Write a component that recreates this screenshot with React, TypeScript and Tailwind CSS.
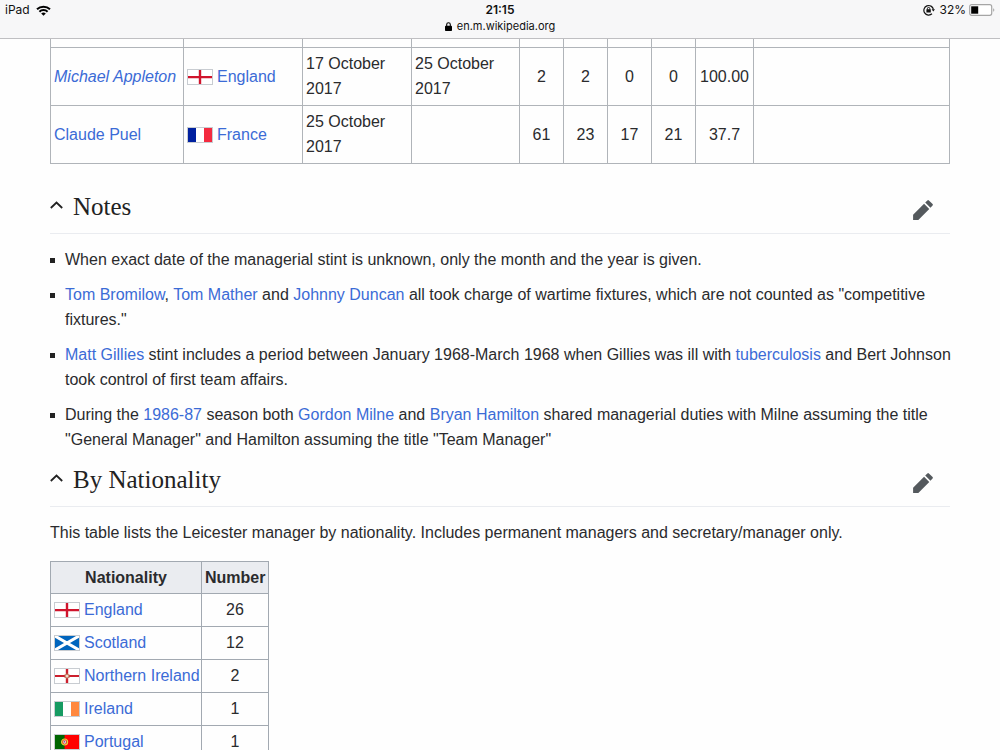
import type { ReactNode } from "react";

type Country =
    | "England"
    | "France"
    | "Scotland"
    | "Northern Ireland"
    | "Ireland"
    | "Portugal";

const managers: {
    name: string;
    caretaker: boolean;
    country: Country;
    from: string;
    to: string;
    stats: string[];
}[] = [
    {
        name: "Michael Appleton",
        caretaker: true,
        country: "England",
        from: "17 October 2017",
        to: "25 October 2017",
        stats: ["2", "2", "0", "0", "100.00"],
    },
    {
        name: "Claude Puel",
        caretaker: false,
        country: "France",
        from: "25 October 2017",
        to: "",
        stats: ["61", "23", "17", "21", "37.7"],
    },
];

const nationalities: { country: Country; count: number }[] = [
    { country: "England", count: 26 },
    { country: "Scotland", count: 12 },
    { country: "Northern Ireland", count: 2 },
    { country: "Ireland", count: 1 },
    { country: "Portugal", count: 1 },
];

const flags: Record<Country, ReactNode> = {
    England: (
        <>
            <path fill="#fff" d="M0 0h24v14H0z" />
            <path fill="#d0142c" d="M10.8 0h2.4v14h-2.4zM0 6h24v2.2H0z" />
        </>
    ),
    France: (
        <>
            <path fill="#fff" d="M0 0h24v14H0z" />
            <path fill="#00209f" d="M0 0h8v14H0z" />
            <path fill="#f42a3f" d="M16 0h8v14h-8z" />
        </>
    ),
    Scotland: (
        <>
            <path fill="#0065bd" d="M0 0h24v14H0z" />
            <path stroke="#fff" strokeWidth="3" d="M0 0l24 14M24 0L0 14" />
        </>
    ),
    "Northern Ireland": (
        <>
            <path fill="#fff" d="M0 0h24v14H0z" />
            <path fill="#cc1f2d" d="M10.8 0h2.4v14h-2.4zM0 6h24v2H0z" />
            <path
                fill="#f4dfd3"
                stroke="#b05a3c"
                strokeWidth=".8"
                d="M12 4.4l.8 1.4 1.6.1-.8 1.2.8 1.2-1.6.1-.8 1.4-.8-1.4-1.6-.1.8-1.2-.8-1.2 1.6-.1z"
            />
        </>
    ),
    Ireland: (
        <>
            <path fill="#fff" d="M0 0h24v14H0z" />
            <path fill="#169b62" d="M0 0h8v14H0z" />
            <path fill="#ff883e" d="M16 0h8v14h-8z" />
        </>
    ),
    Portugal: (
        <>
            <path fill="#f00" d="M0 0h24v14H0z" />
            <path fill="#060" d="M0 0h9.6v14H0z" />
            <circle
                cx="9.6"
                cy="7"
                r="3"
                fill="#d33"
                stroke="#e8d23a"
                strokeWidth="1.2"
            />
            <path fill="#fbe6e0" d="M8.4 5.4h2.4v2.2a1.2 1.2 0 0 1-2.4 0z" />
            <path fill="#35a" d="M9.2 6h.8v1.6h-.8z" />
        </>
    ),
};

function Flag({ country }: { country: Country }) {
    return (
        <svg
            viewBox="0 0 24 14"
            preserveAspectRatio="none"
            aria-hidden="true"
            className="mr-1 inline-block h-4 w-[26px] border border-[#c8ccd1] align-[-3px]"
        >
            {flags[country]}
        </svg>
    );
}

function WikiLink({ children }: { children: ReactNode }) {
    return (
        <a href="#" className="text-[#3b6bd6]">
            {children}
        </a>
    );
}

function StatusBar() {
    return (
        <header className="grid h-[39px] shrink-0 grid-cols-[1fr_auto_1fr] items-start border-b border-[#bfbfc2] bg-[#f7f7f8] px-[5px] pt-[2px] font-[Inter,Roboto,sans-serif] text-[12px] leading-4 text-[#111]">
            <div className="flex items-center gap-[6px]">
                <span>iPad</span>
                <svg
                    viewBox="0 0 15 11"
                    aria-label="Wi-Fi"
                    className="h-[11px] w-[15px]"
                    fill="none"
                    stroke="#000"
                    strokeWidth="2"
                >
                    <path d="M1 4.3a9.3 9.3 0 0 1 13 0M3.4 6.8a5.8 5.8 0 0 1 8.2 0" />
                    <path
                        d="M7.5 10.8L5.2 8.5a3.3 3.3 0 0 1 4.6 0z"
                        fill="#000"
                        stroke="none"
                    />
                </svg>
            </div>
            <div className="flex flex-col items-center">
                <span className="font-semibold">21:15</span>
                <div className="flex items-center gap-[5px]">
                    <svg
                        viewBox="0 0 7 9"
                        aria-hidden="true"
                        className="h-[9px] w-[7px]"
                    >
                        <rect y="3.8" width="7" height="5.2" rx=".8" />
                        <path
                            d="M1.7 4.2V2.5a1.8 1.8 0 0 1 3.6 0v1.7"
                            fill="none"
                            stroke="#000"
                            strokeWidth="1.1"
                        />
                    </svg>
                    <span className="text-[11px]">en.m.wikipedia.org</span>
                </div>
            </div>
            <div className="flex items-center justify-end">
                <svg
                    viewBox="0 0 12 12"
                    aria-label="Rotation lock"
                    className="mr-1 h-3 w-3"
                    fill="none"
                    stroke="#111"
                >
                    <path d="M9 9.8a4.8 4.8 0 1 1 1.4-4.4" strokeWidth="1.2" />
                    <path d="M8.6 5.2H12l-1.7 2.4z" fill="#111" stroke="none" />
                    <rect
                        x="3.4"
                        y="5.2"
                        width="4.4"
                        height="3.4"
                        rx=".4"
                        fill="#111"
                        stroke="none"
                    />
                    <path d="M4.4 5.6v-1a1.2 1.2 0 0 1 2.4 0v1" />
                </svg>
                <span className="mr-[3px]">32%</span>
                <svg
                    viewBox="0 0 26 12"
                    aria-label="Battery"
                    className="h-3 w-[26px]"
                >
                    <rect
                        x=".7"
                        y=".7"
                        width="22"
                        height="10.6"
                        rx="2"
                        fill="#fff"
                        stroke="#a5a5a5"
                        strokeWidth="1.2"
                    />
                    <rect x="2.2" y="2.3" width="7" height="7.4" fill="#000" />
                    <path d="M24.2 4.2a2 2 0 0 1 0 3.6z" fill="#a5a5a5" />
                </svg>
            </div>
        </header>
    );
}

function SectionHeading({ title }: { title: string }) {
    return (
        <div className="flex h-[54px] items-center border-b border-[#eaecf0] pt-0.5">
            <button type="button" className="flex flex-1 items-center text-left">
                <svg
                    viewBox="0 0 13 8"
                    aria-hidden="true"
                    className="mr-[10px] mb-1 h-2 w-[13px]"
                    fill="none"
                    stroke="#222"
                    strokeWidth="1.8"
                >
                    <path d="M.8 7l5.7-5.4L12.2 7" />
                </svg>
                <h2 className="font-['Liberation_Serif',serif] text-[25px] leading-8 text-[#222]">
                    {title}
                </h2>
            </button>
            <button
                type="button"
                aria-label={`Edit ${title}`}
                className="mt-[6px] mr-4"
            >
                <svg
                    viewBox="0 0 20 20"
                    className="h-[22px] w-[22px]"
                    fill="#54595d"
                >
                    <path d="M16.77 8l1.94-2a1 1 0 0 0 0-1.41l-3.34-3.3a1 1 0 0 0-1.41 0L12 3.23zM1 14.25V19h4.75l9.96-9.96-4.75-4.75z" />
                </svg>
            </button>
        </div>
    );
}

function ManagersTable() {
    const cell = "h-[58px] border border-[#b0b4b9] px-[3px] py-0";

    return (
        <table className="w-full table-fixed border-collapse">
            <colgroup>
                <col className="w-[133px]" />
                <col className="w-[119px]" />
                <col className="w-[109px]" />
                <col className="w-[108px]" />
                <col className="w-[44px]" />
                <col className="w-[44px]" />
                <col className="w-[44px]" />
                <col className="w-[44px]" />
                <col className="w-[58px]" />
                <col />
            </colgroup>
            <tbody>
                {/* tail of the row that is scrolled under the status bar */}
                <tr aria-hidden="true">
                    {Array.from({ length: 10 }, (_, i) => (
                        <td
                            key={i}
                            className="h-2 border border-t-0 border-[#b0b4b9] p-0"
                        />
                    ))}
                </tr>
                {managers.map((m) => (
                    <tr key={m.name}>
                        <td className={cell}>
                            <WikiLink>
                                {m.caretaker ? <i>{m.name}</i> : m.name}
                            </WikiLink>
                        </td>
                        <td className={cell}>
                            <Flag country={m.country} />
                            <WikiLink>{m.country}</WikiLink>
                        </td>
                        <td className={cell}>{m.from}</td>
                        <td className={cell}>{m.to}</td>
                        {m.stats.map((value, i) => (
                            <td key={i} className={`${cell} text-center`}>
                                {value}
                            </td>
                        ))}
                        <td className={cell} />
                    </tr>
                ))}
            </tbody>
        </table>
    );
}

function Note({ children }: { children: ReactNode }) {
    return (
        <li className="flex">
            <span className="mt-[11px] mr-[10px] size-[5px] shrink-0 bg-[#222]" />
            <p>{children}</p>
        </li>
    );
}

export default function App() {
    return (
        <div className="flex h-screen flex-col overflow-hidden bg-[#fefefe] font-['Liberation_Sans',Arial,sans-serif] text-[16px] leading-[25px] text-[#2a2b2d]">
            <StatusBar />
            <main className="min-h-0 flex-1 overflow-hidden px-[50px]">
                <ManagersTable />

                <section className="mt-4">
                    <SectionHeading title="Notes" />
                    <ul className="-mr-1 mt-[13px] flex flex-col gap-[10px]">
                        <Note>
                            When exact date of the managerial stint is unknown,
                            only the month and the year is given.
                        </Note>
                        <Note>
                            <WikiLink>Tom Bromilow</WikiLink>,{" "}
                            <WikiLink>Tom Mather</WikiLink> and{" "}
                            <WikiLink>Johnny Duncan</WikiLink> all took charge
                            of wartime fixtures, which are not counted as
                            "competitive fixtures."
                        </Note>
                        <Note>
                            <WikiLink>Matt Gillies</WikiLink> stint includes a
                            period between January 1968-March 1968 when Gillies
                            was ill with <WikiLink>tuberculosis</WikiLink> and
                            Bert Johnson took control of first team affairs.
                        </Note>
                        <Note>
                            During the <WikiLink>1986-87</WikiLink> season both{" "}
                            <WikiLink>Gordon Milne</WikiLink> and{" "}
                            <WikiLink>Bryan Hamilton</WikiLink> shared
                            managerial duties with Milne assuming the title
                            "General Manager" and Hamilton assuming the title
                            "Team Manager"
                        </Note>
                    </ul>
                </section>

                <section className="mt-px">
                    <SectionHeading title="By Nationality" />
                    <p className="mt-[13px]">
                        This table lists the Leicester manager by nationality.
                        Includes permanent managers and secretary/manager only.
                    </p>
                    <table className="mt-4 w-[219px] table-fixed border-collapse">
                        <colgroup>
                            <col className="w-[151px]" />
                            <col />
                        </colgroup>
                        <thead>
                            <tr className="bg-[#eaecf0]">
                                <th className="border border-[#a2a9b1] px-[3px] py-[3px]">
                                    Nationality
                                </th>
                                <th className="border border-[#a2a9b1] px-[3px] py-[3px]">
                                    Number
                                </th>
                            </tr>
                        </thead>
                        <tbody>
                            {nationalities.map(({ country, count }) => (
                                <tr key={country}>
                                    <td className="h-[33px] border border-[#a2a9b1] px-[3px] py-[3px] whitespace-nowrap">
                                        <Flag country={country} />
                                        <WikiLink>{country}</WikiLink>
                                    </td>
                                    <td className="h-[33px] border border-[#a2a9b1] px-[3px] py-[3px] text-center">
                                        {count}
                                    </td>
                                </tr>
                            ))}
                        </tbody>
                    </table>
                </section>
            </main>
        </div>
    );
}
